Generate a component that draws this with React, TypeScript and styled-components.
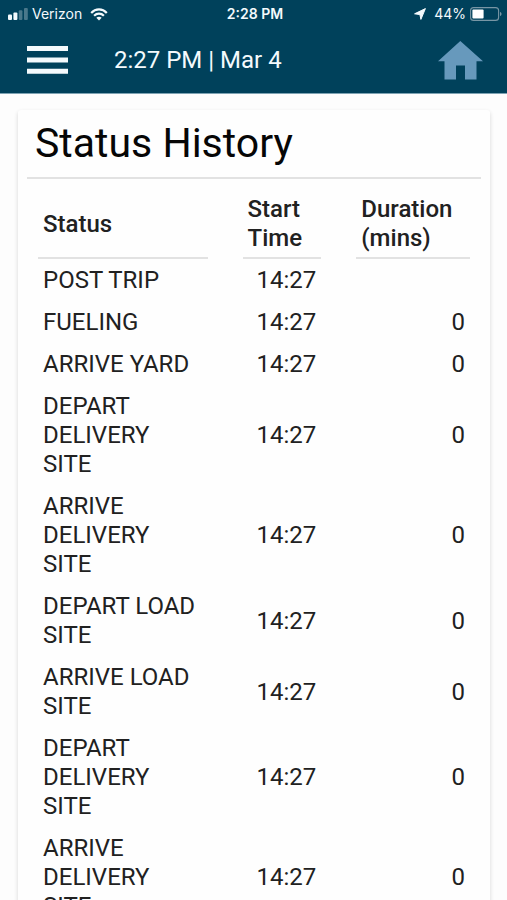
import React from "react";
import styled, { createGlobalStyle } from "styled-components";

const GlobalStyle = createGlobalStyle`
  * { box-sizing: border-box; }
  html { scrollbar-width: none; }
  body {
    margin: 0;
    background: #fdfdfd;
    color: #212121;
    font-family: Roboto, sans-serif;
    font-size: 24px;
    line-height: 29px;
  }
`;

const TopBar = styled.header`
  padding-bottom: 1px;
  background: #00415b;
  color: #f4fafd;
  border-bottom: 1px solid #7ea3b3;
`;

const StatusBar = styled.div`
  display: grid;
  grid-template-columns: 1fr auto 1fr;
  align-items: center;
  height: 28px;
  padding: 0 5px 0 8px;
  font-family: Inter, sans-serif;
  font-size: 14px;
  line-height: 20px;
`;

const Carrier = styled.div`
  display: flex;
  align-items: center;
  gap: 4px;
`;

const Wifi = styled.svg`
  margin-left: 4px;
`;

const Clock = styled.time`
  font-weight: 600;
`;

const Power = styled.div`
  display: flex;
  align-items: center;
  justify-content: flex-end;
  gap: 4px;
`;

const LocationArrow = styled.svg`
  margin-right: 4px;
`;

const Toolbar = styled.div`
  display: flex;
  align-items: center;
  height: 64px;
  padding: 0 24px 0 27px;
`;

const IconButton = styled.button`
  display: flex;
  padding: 0;
  border: 0;
  background: none;
  color: inherit;
  cursor: pointer;
`;

const HomeLink = styled.a`
  display: flex;
  color: #6799bc;
`;

const ToolbarTitle = styled.div`
  flex: 1;
  padding-left: 46px;
`;

const Card = styled.main`
  margin: 16px 17px 0 18px;
  padding: 4px 9px 12px;
  background: #fefefe;
  border-radius: 3px;
  box-shadow: 0 2px 4px rgba(0, 0, 0, 0.16);
`;

const Title = styled.h1`
  margin: 0;
  padding: 4px 8px 9px;
  border-bottom: 2px solid #e2e2e2;
  color: #060606;
  font-size: 41px;
  font-weight: 400;
  line-height: 50px;
`;

const HistoryTable = styled.table`
  display: block;
  padding: 13px 11px 0;
`;

const TableHead = styled.thead`
  display: block;
  margin-bottom: 1px;
`;

const TableBody = styled.tbody`
  display: block;
`;

const Row = styled.tr`
  display: grid;
  grid-template-columns: 170fr 79fr 114fr;
  column-gap: 35px;
`;

const HeadCell = styled.th`
  display: flex;
  align-items: center;
  padding: 3px 5px 4px;
  border-bottom: 2px solid #e2e2e2;
  font-weight: 500;
  text-align: left;
`;

const Cell = styled.td<{ $numeric?: boolean }>`
  align-self: center;
  padding: 6px 5px 7px;
  text-align: ${(p) => (p.$numeric ? "right" : "left")};
`;

type Entry = { status: string; start: string; duration: string };

const entries: Entry[] = [
  { status: "POST TRIP", start: "14:27", duration: "" },
  { status: "FUELING", start: "14:27", duration: "0" },
  { status: "ARRIVE YARD", start: "14:27", duration: "0" },
  { status: "DEPART DELIVERY SITE", start: "14:27", duration: "0" },
  { status: "ARRIVE DELIVERY SITE", start: "14:27", duration: "0" },
  { status: "DEPART LOAD SITE", start: "14:27", duration: "0" },
  { status: "ARRIVE LOAD SITE", start: "14:27", duration: "0" },
  { status: "DEPART DELIVERY SITE", start: "14:27", duration: "0" },
  { status: "ARRIVE DELIVERY SITE", start: "14:27", duration: "0" },
];

export default function App() {
  return (
    <>
      <GlobalStyle />
      <TopBar>
        <StatusBar>
          <Carrier>
            <svg width="20" height="12" viewBox="0 0 20 12" fill="currentColor" aria-hidden="true">
              <rect x="0" y="6.5" width="4" height="5.5" rx="1" />
              <rect x="5.4" y="4.5" width="4" height="7.5" rx="1" />
              <rect x="10.8" y="2.2" width="3.6" height="9.8" rx="1" opacity="0.3" />
              <rect x="16" y="0" width="3.8" height="12" rx="1" opacity="0.3" />
            </svg>
            Verizon
            <Wifi width="18" height="13" viewBox="0 0 18 13" fill="none" stroke="currentColor" strokeWidth="2.2" aria-hidden="true">
              <path d="M1.2 4.9C5.6.2 12.4.2 16.8 4.9" />
              <path d="M4.1 7.8C6.9 5 11.1 5 13.9 7.8" />
              <path d="M9 12.6 6.3 9.8C7.9 8.5 10.1 8.5 11.7 9.8Z" fill="currentColor" stroke="none" />
            </Wifi>
          </Carrier>
          <Clock>2:28 PM</Clock>
          <Power>
            <LocationArrow width="12" height="12" viewBox="0 0 12 12" fill="currentColor" aria-hidden="true">
              <path d="M11.4.6 6.9 11.4 5.9 6.6.6 5.8Z" stroke="currentColor" strokeWidth="1" strokeLinejoin="round" />
            </LocationArrow>
            44%
            <svg width="32" height="14" viewBox="0 0 32 14" aria-hidden="true">
              <rect x=".6" y=".6" width="28" height="12.8" rx="3" fill="none" stroke="#7896a5" strokeWidth="1.1" />
              <rect x="2.4" y="2.4" width="11.2" height="9.2" rx="1" fill="#fff" />
              <path d="M30 5c2 .6 2 3.4 0 4Z" fill="#7896a5" />
            </svg>
          </Power>
        </StatusBar>
        <Toolbar>
          <IconButton type="button" aria-label="Menu">
            <svg width="41" height="28" viewBox="0 0 41 28" fill="currentColor">
              <path d="M0 0H41V5H0ZM0 11.5H41V16.5H0ZM0 22.7H41V27.7H0Z" />
            </svg>
          </IconButton>
          <ToolbarTitle>2:27 PM | Mar 4</ToolbarTitle>
          <HomeLink href="#home" aria-label="Home">
            <svg width="45" height="39" viewBox="0 0 45 39" fill="currentColor">
              <path d="M22.3 0 45 20.3H38.5V38.5H27V24.5H18V38.5H6.5V20.3H0Z" />
            </svg>
          </HomeLink>
        </Toolbar>
      </TopBar>
      <Card>
        <Title>Status History</Title>
        <HistoryTable>
          <TableHead>
            <Row>
              <HeadCell scope="col">Status</HeadCell>
              <HeadCell scope="col">Start Time</HeadCell>
              <HeadCell scope="col">Duration (mins)</HeadCell>
            </Row>
          </TableHead>
          <TableBody>
            {entries.map((entry, i) => (
              <Row key={i}>
                <Cell>{entry.status}</Cell>
                <Cell $numeric>{entry.start}</Cell>
                <Cell $numeric>{entry.duration}</Cell>
              </Row>
            ))}
          </TableBody>
        </HistoryTable>
      </Card>
    </>
  );
}
